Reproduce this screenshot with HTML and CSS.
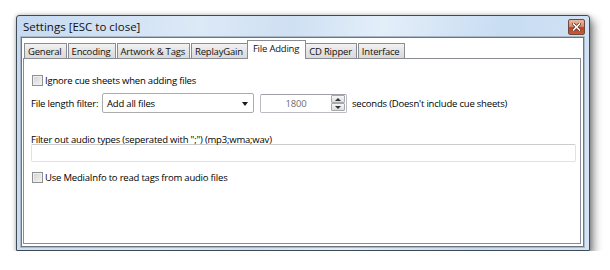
FILE: index.html
```html
<!DOCTYPE html>
<html lang="en">

<head>
    <meta charset="UTF-8">
    <title>Settings</title>
    <link rel="stylesheet" href="styles.css">
</head>

<body>
    <div class="window">
        <div class="titlebar">
            <span class="title">Settings [ESC to close]</span>
            <span class="closeBtn">
                <svg width="9" height="8" viewBox="0 0 9 8">
                    <path d="M1.5 1 L7.5 7 M7.5 1 L1.5 7" stroke="#5a2a20" stroke-width="3" stroke-linecap="square"/>
                    <path d="M1.5 1 L7.5 7 M7.5 1 L1.5 7" stroke="#fff" stroke-width="1.6" stroke-linecap="square"/>
                </svg>
            </span>
        </div>
        <div class="client">
            <div class="tabs">
                <div class="tab">General</div>
                <div class="tab">Encoding</div>
                <div class="tab">Artwork &amp; Tags</div>
                <div class="tab">ReplayGain</div>
                <div class="tab active">File Adding</div>
                <div class="tab">CD Ripper</div>
                <div class="tab">Interface</div>
            </div>
            <div class="panel">
                <div class="checkRow">
                    <span class="checkbox"></span>
                    <span>Ignore cue sheets when adding files</span>
                </div>
                <div class="filterRow">
                    <span class="filterLabel">File length filter:</span>
                    <div class="select">
                        <span>Add all files</span>
                        <span class="selectArrow"></span>
                    </div>
                    <div class="spin">
                        <span class="spinValue">1800</span>
                        <span class="spinBtns">
                            <span class="spinBtn"><span class="arrowUp"></span></span>
                            <span class="spinBtn"><span class="arrowDown"></span></span>
                        </span>
                    </div>
                    <span class="seconds">seconds (Doesn't include cue sheets)</span>
                </div>
                <div class="typesLabel">Filter out audio types (seperated with ";") (mp3;wma;wav)</div>
                <div class="typesInput"></div>
                <div class="checkRow second">
                    <span class="checkbox"></span>
                    <span>Use MediaInfo to read tags from audio files</span>
                </div>
            </div>
        </div>
    </div>
</body>
</html>
```

FILE: styles.css
```css
body {
    margin: 0;
    padding: 15px 0 0 16px;
    background-color: #fff;
    font-family: "Open Sans", "Noto Sans", sans-serif;
    font-size: 9.5px;
    letter-spacing: -0.2px;
    color: #000;
    white-space: nowrap;
}

.window {
    width: 574px;
    height: 236px;
    box-sizing: border-box;
    display: flex;
    flex-direction: column;
    padding: 0 5px 3px 4px;
    border: 1px solid #3f4a55;
    border-radius: 3px 3px 0 0;
    background: linear-gradient(100deg, #c6daf1 0%, #dce9f7 30%, #cfe0f3 45%, #e3eef9 60%, #c8dcf2 80%, #d4e4f5 100%);
    box-shadow: 4px 5px 9px rgba(0, 0, 0, 0.45), 0 0 4px rgba(0, 0, 0, 0.25);
}

.titlebar {
    height: 21px;
    display: flex;
    align-items: center;
    justify-content: space-between;
}

.title {
    padding-left: 2px;
    font-size: 11.5px;
    letter-spacing: 0;
    color: #111;
}

.closeBtn {
    width: 15px;
    height: 14px;
    margin-right: -1px;
    margin-top: 1px;
    display: flex;
    align-items: center;
    justify-content: center;
    border: 1px solid #6e4a3e;
    border-radius: 2px;
    background: linear-gradient(#e8b8a4 0%, #d98d70 45%, #c1421f 55%, #c95a35 100%);
}

.client {
    flex: 1;
    display: flex;
    flex-direction: column;
    padding: 2px 2px 2px 1px;
    border: 1px solid #6c7580;
    background-color: #fff;
    box-shadow: 0 0 0 1px #a9b8c9;
}

.tabs {
    display: flex;
    padding-left: 1px;
    height: 19px;
    align-items: flex-end;
}

.tab {
    height: 15px;
    line-height: 15px;
    padding: 0 4px 0 3px;
    margin-right: 1px;
    border: 1px solid #898c95;
    border-bottom: none;
    background: linear-gradient(#f2f2f2, #e3e3e3 50%, #d9d9d9);
    color: #111;
}

.tab.active {
    height: 18px;
    line-height: 16px;
    margin: 0 -1px 0 -2px;
    padding: 0 6px 0 5px;
    background: #fff;
    position: relative;
    z-index: 1;
}

.panel {
    flex: 1;
    margin-top: -1px;
    padding: 14px 7px 0 7px;
    border: 1px solid #898c95;
    background-color: #fff;
}

.checkRow {
    height: 14px;
    display: flex;
    align-items: center;
    gap: 2px;
}

.checkRow.second {
    margin-top: 8px;
}

.checkbox {
    width: 9px;
    height: 9px;
    margin-left: 1px;
    border: 1px solid #8e8f8f;
    background: linear-gradient(135deg, #d2d2d2, #f4f4f4);
    box-shadow: inset 0 0 0 1px #f0f0f0;
}

.filterRow {
    display: flex;
    align-items: center;
    margin-top: 6px;
}

.filterLabel {
    width: 71px;
}

.select {
    box-sizing: border-box;
    width: 152px;
    height: 20px;
    display: flex;
    align-items: center;
    justify-content: space-between;
    padding: 0 5px 0 4px;
    border: 1px solid #acacac;
    border-radius: 2px;
    background-color: #fff;
}

.selectArrow {
    width: 0;
    height: 0;
    border-left: 3px solid transparent;
    border-right: 3px solid transparent;
    border-top: 4px solid #1a1a1a;
    margin-top: 1px;
}

.spin {
    width: 87px;
    height: 19px;
    box-sizing: border-box;
    margin-left: 6px;
    display: flex;
    align-items: center;
    border: 1px solid #b9bcc2;
    border-top-color: #9da0a7;
    border-radius: 2px;
}

.spinValue {
    flex: 1;
    text-align: center;
    color: #6d6d6d;
}

.spinBtns {
    width: 14px;
    height: 16px;
    display: flex;
    flex-direction: column;
    margin-right: 1px;
}

.spinBtn {
    flex: 1;
    display: flex;
    align-items: center;
    justify-content: center;
    border: 1px solid #a5a8ad;
    border-radius: 1px;
    background: linear-gradient(#f6f6f6, #dcdcdc);
}

.arrowUp,
.arrowDown {
    width: 0;
    height: 0;
    border-left: 3px solid transparent;
    border-right: 3px solid transparent;
}

.arrowUp {
    border-bottom: 3px solid #333;
}

.arrowDown {
    border-top: 3px solid #333;
}

.seconds {
    margin-left: 5px;
}

.typesLabel {
    margin-top: 21px;
    line-height: 11px;
}

.typesInput {
    height: 16px;
    margin-top: -1px;
    margin-right: -3px;
    border: 1px solid #dfe3e8;
    border-top-color: #cccccc;
    border-radius: 2px;
}
```
